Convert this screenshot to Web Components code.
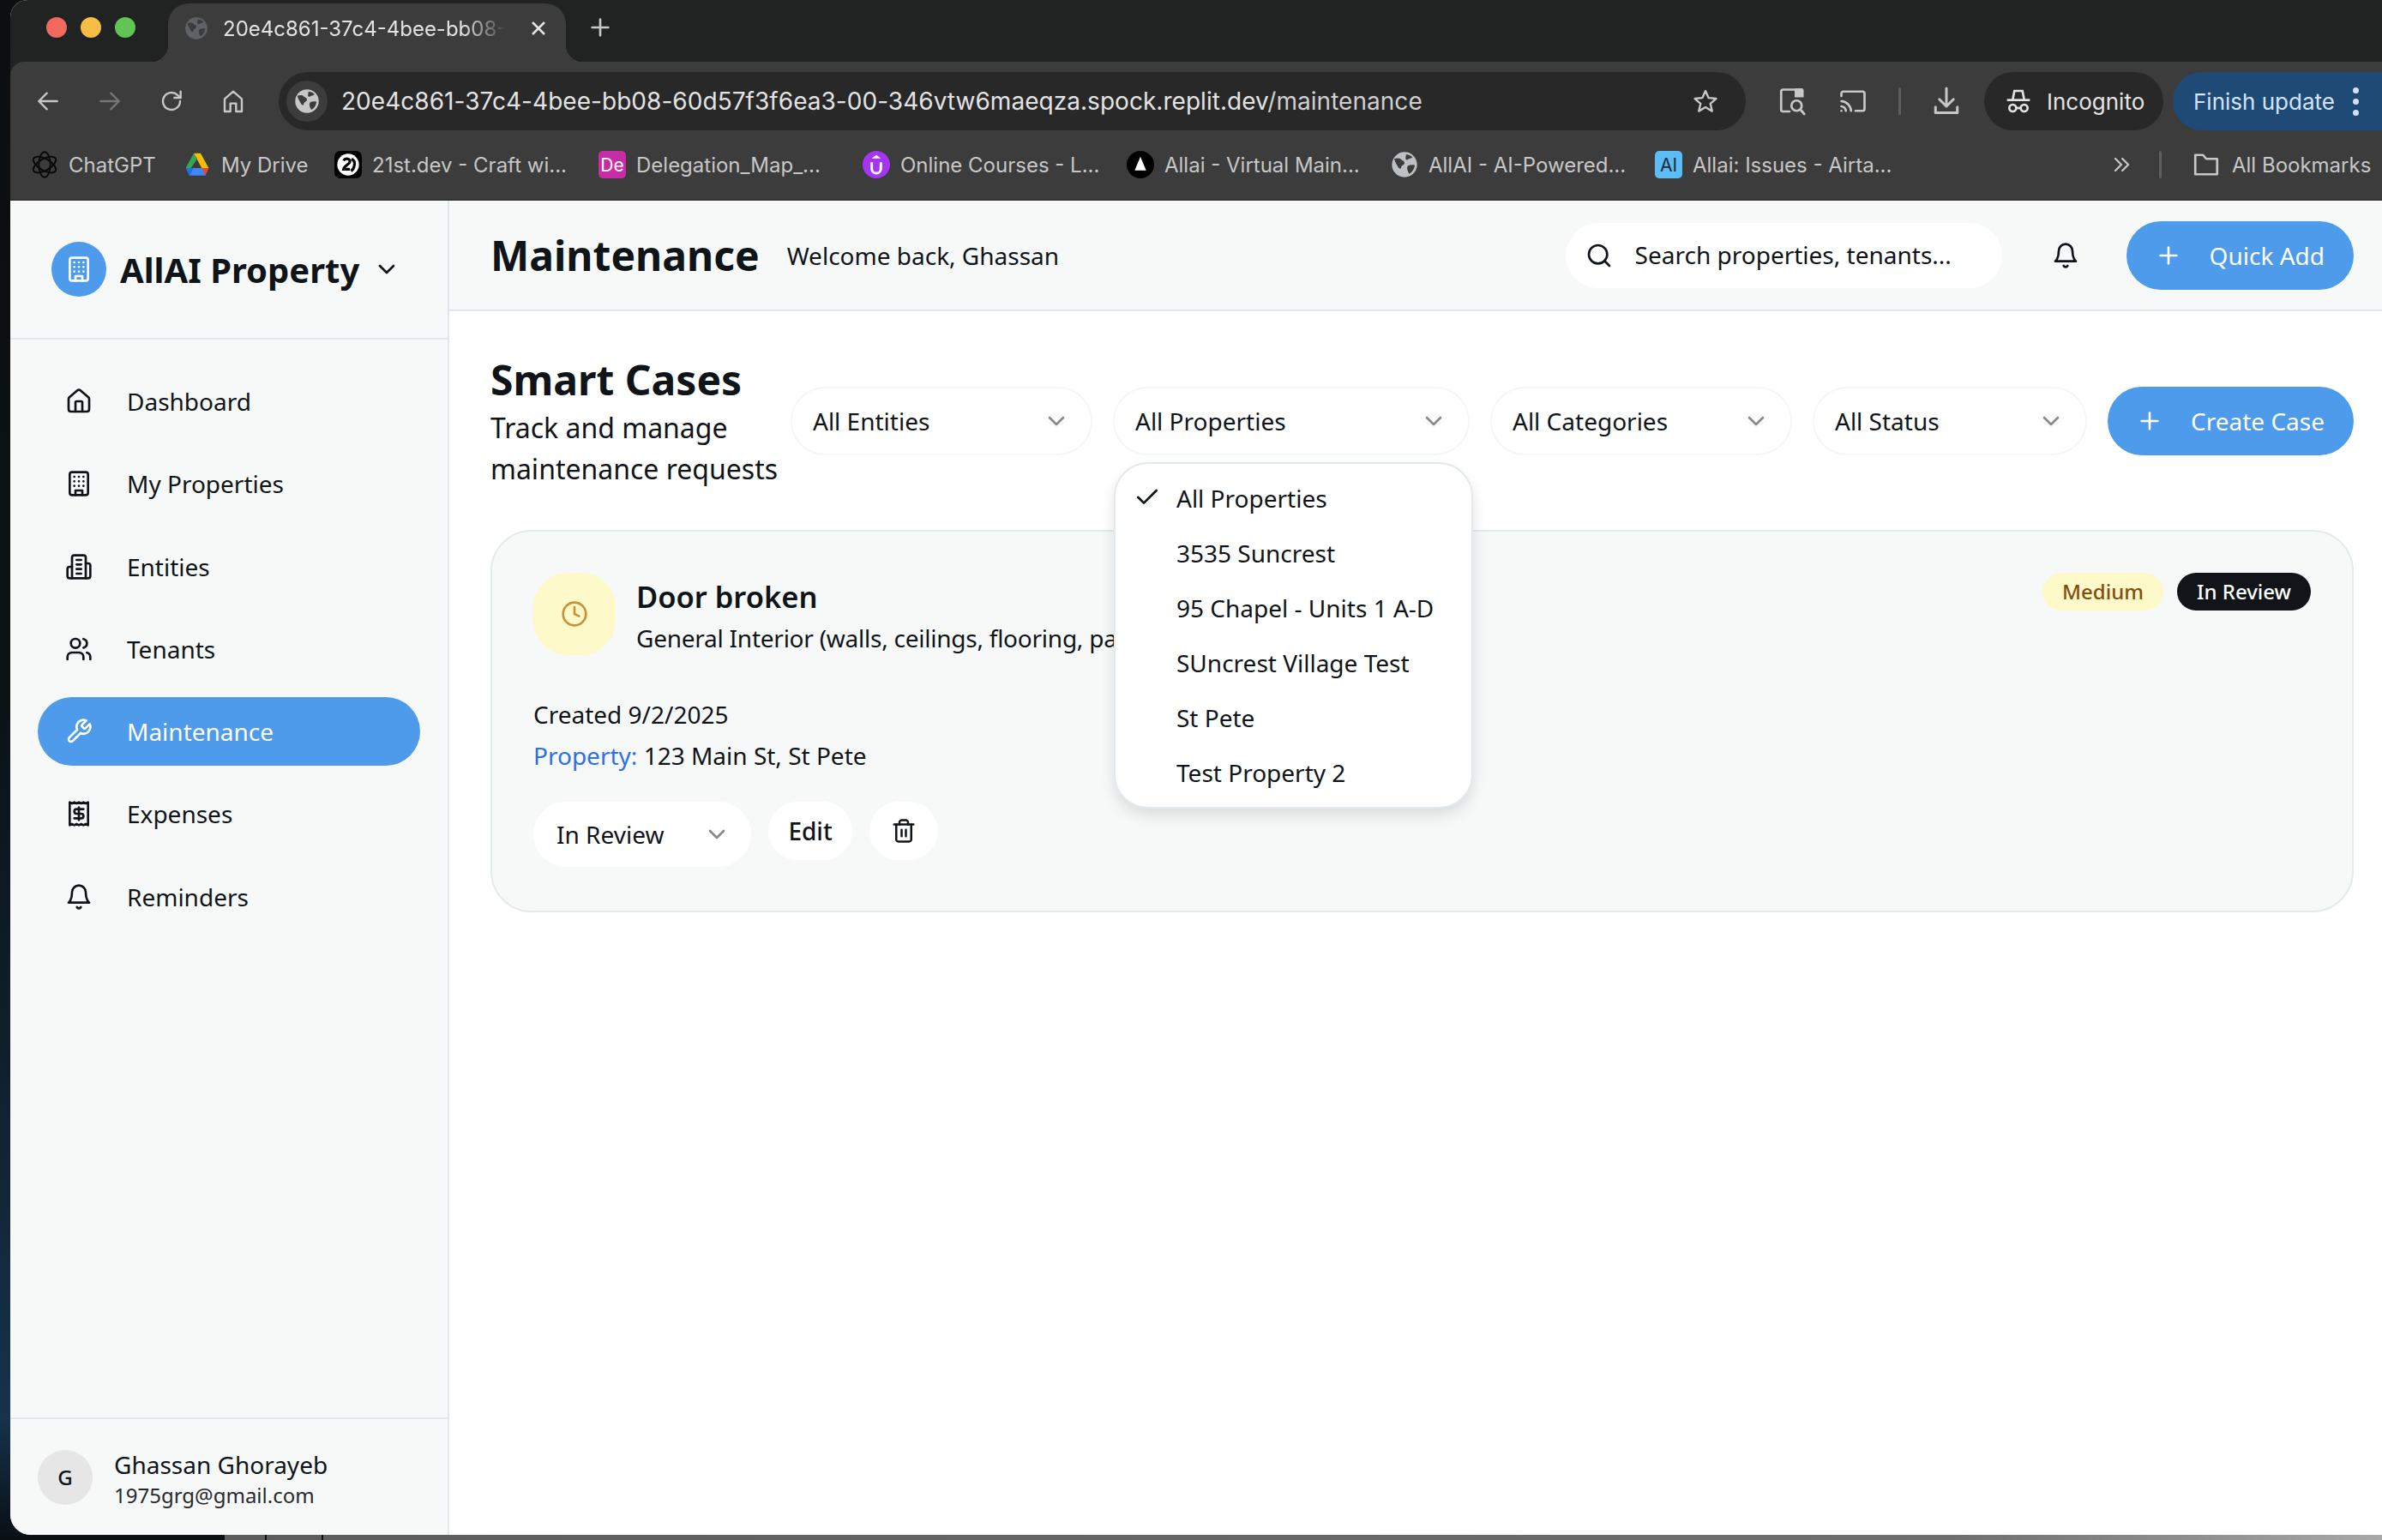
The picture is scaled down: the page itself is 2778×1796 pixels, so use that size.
<!DOCTYPE html>
<html>
<head>
<meta charset="utf-8">
<title>Maintenance</title>
<style>
  html, body { margin: 0; height: 100%; overflow: hidden; background: #0b0f13; }
  body { font-family: "Noto Sans", "Open Sans", sans-serif; color: #0f1419; }
</style>
</head>
<body>
<desktop-frame>
  <browser-chrome></browser-chrome>
  <app-sidebar>
    <nav-item icon="house">Dashboard</nav-item>
    <nav-item icon="building">My Properties</nav-item>
    <nav-item icon="building2">Entities</nav-item>
    <nav-item icon="users">Tenants</nav-item>
    <nav-item icon="wrench" active>Maintenance</nav-item>
    <nav-item icon="receipt">Expenses</nav-item>
    <nav-item icon="bell">Reminders</nav-item>
  </app-sidebar>
  <app-header title="Maintenance" welcome="Welcome back, Ghassan"></app-header>
  <cases-page>
    <filter-select style="width:352px">All Entities</filter-select>
    <filter-select style="width:416px">All Properties
      <property-menu slot="menu">
        <menu-row checked>All Properties</menu-row>
        <menu-row>3535 Suncrest</menu-row>
        <menu-row>95 Chapel - Units 1 A-D</menu-row>
        <menu-row>SUncrest Village Test</menu-row>
        <menu-row>St Pete</menu-row>
        <menu-row>Test Property 2</menu-row>
      </property-menu>
    </filter-select>
    <filter-select style="width:352px">All Categories</filter-select>
    <filter-select style="width:320px">All Status</filter-select>
    <primary-button>Create Case</primary-button>
    <case-card slot="cards"></case-card>
  </cases-page>
</desktop-frame>

<script>
// lucide style icon bodies, 24 box
const ICONS = {
  house: '<path d="M15 21v-8a1 1 0 0 0-1-1h-4a1 1 0 0 0-1 1v8"/><path d="M3 10a2 2 0 0 1 .709-1.528l7-5.999a2 2 0 0 1 2.582 0l7 5.999A2 2 0 0 1 21 10v9a2 2 0 0 1-2 2H5a2 2 0 0 1-2-2z"/>',
  building: '<rect width="16" height="20" x="4" y="2" rx="2" ry="2"/><path d="M9 22v-4h6v4"/><path d="M8 6h.01M16 6h.01M12 6h.01M12 10h.01M12 14h.01M16 10h.01M16 14h.01M8 10h.01M8 14h.01"/>',
  building2: '<path d="M6 22V4a2 2 0 0 1 2-2h8a2 2 0 0 1 2 2v18Z"/><path d="M6 12H4a2 2 0 0 0-2 2v6a2 2 0 0 0 2 2h2"/><path d="M18 9h2a2 2 0 0 1 2 2v9a2 2 0 0 1-2 2h-2"/><path d="M10 6h4M10 10h4M10 14h4M10 18h4"/>',
  users: '<path d="M16 21v-2a4 4 0 0 0-4-4H6a4 4 0 0 0-4 4v2"/><circle cx="9" cy="7" r="4"/><path d="M22 21v-2a4 4 0 0 0-3-3.87"/><path d="M16 3.13a4 4 0 0 1 0 7.75"/>',
  wrench: '<path d="M14.7 6.3a1 1 0 0 0 0 1.4l1.6 1.6a1 1 0 0 0 1.4 0l3.77-3.77a6 6 0 0 1-7.94 7.94l-6.91 6.91a2.12 2.12 0 0 1-3-3l6.91-6.91a6 6 0 0 1 7.94-7.94l-3.76 3.76z"/>',
  receipt: '<path d="M4 2v20l2-1 2 1 2-1 2 1 2-1 2 1 2-1 2 1V2l-2 1-2-1-2 1-2-1-2 1-2-1-2 1Z"/><path d="M16 8h-6a2 2 0 1 0 0 4h4a2 2 0 1 1 0 4H8"/><path d="M12 17.5v-11"/>',
  bell: '<path d="M6 8a6 6 0 0 1 12 0c0 7 3 9 3 9H3s3-2 3-9"/><path d="M10.3 21a1.94 1.94 0 0 0 3.4 0"/>',
  search: '<circle cx="11" cy="11" r="8"/><path d="m21 21-4.3-4.3"/>',
  plus: '<path d="M5 12h14M12 5v14"/>',
  chevron: '<path d="m6 9 6 6 6-6"/>',
  check: '<path d="M20 6 9 17l-5-5"/>',
  clock: '<circle cx="12" cy="12" r="10"/><polyline points="12 6 12 12 16 14"/>',
  trash: '<path d="M3 6h18"/><path d="M19 6v14c0 1-1 2-2 2H7c-1 0-2-1-2-2V6"/><path d="M8 6V4c0-1 1-2 2-2h4c1 0 2 1 2 2v2"/><path d="M10 11v6M14 11v6"/>',
  back: '<path d="M20 12H4M11 5l-7 7 7 7"/>',
  forward: '<path d="M4 12h16M13 5l7 7-7 7"/>',
  reload: '<path d="M19.5 12a7.5 7.5 0 1 1-2.3-5.4L20 9"/><path d="M20 3.5V9h-5.5"/>',
  home: '<path d="M4.500 21V10L12 3.500 19.500 10v11h-5v-7h-5v7z"/>',
  star: '<path d="m12 3 2.700 6.100 6.600.7-5 4.400 1.500 6.500L12 17.300 6.200 20.700l1.500-6.500-5-4.400 6.600-.7z"/>',
  cast: '<path d="M3 8V6a1.500 1.500 0 0 1 1.500-1.500h15A1.500 1.500 0 0 1 21 6v12a1.500 1.500 0 0 1-1.500 1.500H14"/><path d="M3 12a8 8 0 0 1 7.500 7.500M3 16a4 4 0 0 1 3.500 3.500"/><path d="M3 19.500h.01"/>',
  lens: '<path d="M10 20H5a1.500 1.500 0 0 1-1.500-1.500v-14A1.500 1.500 0 0 1 5 3h9"/><path d="M14 2h5.500A1.500 1.500 0 0 1 21 3.500V9h-7z" fill="currentColor" stroke="none"/><circle cx="15.500" cy="15.500" r="4"/><path d="m18.500 18.500 3 3.500"/>',
  download: '<path d="M12 2v14M6.500 10.500 12 16l5.500-5.500"/><path d="M3.500 16.500v4.500h17v-4.500"/>',
  folder: '<path d="M3.500 19.500V4.500h6l2.500 3h8.500v12z"/>',
  dchevron: '<path d="m6 6 6 6-6 6M13 6l6 6-6 6"/>'
};

function icon(name, size, weight) {
  return `<svg width="${size}" height="${size}" viewBox="0 0 24 24" fill="none" stroke="currentColor" stroke-width="${weight || 2}" stroke-linecap="round" stroke-linejoin="round" style="display:block;flex:none">${ICONS[name]}</svg>`;
}

const GLOBE = (size, fill, cut) => `<svg width="${size}" height="${size}" viewBox="0 0 24 24" style="display:block;flex:none"><circle cx="12" cy="12" r="11" fill="${fill}"/><path d="M3 7c3-1 5-.5 6 .5s3 1 3 3-3 2-3 4-2 1-3-1-2-3-3-6.500zM13 3c2 0 4 .500 6 2.500-1 1.500-3 1-4 2s-2.500 0-2-2 .5-2.500 0-2.500zM15 13c2-1 4-1 6-.5-.5 3-2 6-5 7.500-1-2-2.500-5-1-7z" fill="${cut}"/></svg>`;

class DesktopFrame extends HTMLElement {
  connectedCallback() {
    this.attachShadow({ mode: 'open' }).innerHTML = `
      <style>
        :host { display: block; height: 1796px; position: relative;
          background: linear-gradient(180deg, #0c0e10 0, #0b1216 45%, #11202d 70%, #16324c 92%, #0a0f14 100%); }
        .window { margin-left: 12px; width: 2766px; height: 1790px; overflow: hidden; background: #fff;
          border-radius: 20px 0 0 24px; display: grid; grid-template-columns: 512px 1fr; grid-template-rows: 234px 129px 1fr; }
        ::slotted(browser-chrome) { grid-column: 1 / 3; }
        ::slotted(app-sidebar) { grid-row: 2 / 4; }
        .dock { height: 6px; margin-left: 262px; box-shadow: 0 -1px 0 #111;
          background: linear-gradient(#111, #111) 47px 0 / 2px 6px no-repeat, linear-gradient(#111, #111) 113px 0 / 2px 6px no-repeat, linear-gradient(90deg, #5c5c5c, #6e6e6e 80%, #a8a8a8); }
      </style>
      <div class="window"><slot></slot></div>
      <div class="dock"></div>`;
  }
}

class BrowserChrome extends HTMLElement {
  connectedCallback() {
    const marks = [
      [178, 'ChatGPT', `<svg width="32" height="32" viewBox="0 0 24 24" fill="none" stroke="#0a0a0a" stroke-width="1.500"><ellipse cx="12" cy="12" rx="5" ry="11"/><ellipse cx="12" cy="12" rx="5" ry="11" transform="rotate(60 12 12)"/><ellipse cx="12" cy="12" rx="5" ry="11" transform="rotate(120 12 12)"/></svg>`],
      [176, 'My Drive', `<svg width="32" height="32" viewBox="0 0 24 24"><path d="M9 2h6l7 13h-6z" fill="#fbbc04"/><path d="M8.500 15H22l-3 6.500H5z" fill="#4285f4"/><path d="M2 15l6.500 0L5 21.500z" fill="#1a73e8"/><path d="M9 2l3 5-5.500 8H2z" fill="#34a853"/><path d="M22 15l-3 6.500-3-6.500z" fill="#ea4335"/></svg>`],
      [308, '21st.dev - Craft wi...', `<svg width="32" height="32" viewBox="0 0 24 24"><rect width="24" height="24" rx="5" fill="#000"/><circle cx="12" cy="12" r="9.500" fill="#fff"/><path d="M8 8.500c1.500-2.500 6-2 5.500 1-.4 2.500-5 3.500-5.500 6.500h5.500M15 7c2 1 3 3 2.500 5.500-.3 2-1.500 4-3 5" fill="none" stroke="#000" stroke-width="2.400"/></svg>`],
      [308, 'Delegation_Map_...', `<span class="tile" style="background:#c62ca6;color:#fff">De</span>`],
      [308, 'Online Courses - L...', `<svg width="32" height="32" viewBox="0 0 24 24"><circle cx="12" cy="12" r="12" fill="#a435f0"/><path d="M8 10v5.500a4 4 0 0 0 8 0V10" fill="none" stroke="#fff" stroke-width="2.200"/><path d="M12 3.500 16 6.500H8z" fill="#fff"/></svg>`],
      [308, 'Allai - Virtual Main...', `<svg width="32" height="32" viewBox="0 0 24 24"><circle cx="12" cy="12" r="12" fill="#000"/><path d="M12 5l5 12H7z" fill="#fff"/></svg>`],
      [308, 'AllAI - AI-Powered...', GLOBE(32, '#bdc1c6', '#3c3c3c')],
      [532, 'Allai: Issues - Airta...', `<span class="tile" style="background:#5cbcf6;color:#1d2b36">AI</span>`]
    ].map(m => `<span class="mark" style="width:${m[0]}px">${m[2]}<span>${m[1]}</span></span>`).join('');
    this.attachShadow({ mode: 'open' }).innerHTML = `
      <style>
        :host { display: block; font-family: Inter, "Liberation Sans", sans-serif; background: #212322; color: #e3e3e3; }
        .strip { height: 72px; display: flex; align-items: flex-end; }
        .lights { width: 184px; height: 68px; display: flex; gap: 16px; padding: 16px 0 0 42px; box-sizing: border-box; }
        .lights i { width: 24px; height: 24px; border-radius: 50%; }
        .tab { width: 464px; height: 68px; background: #3c3c3c; border-radius: 24px 24px 0 0; position: relative;
          display: flex; align-items: center; padding: 0 0 10px 19px; box-sizing: border-box; gap: 17px; font-size: 24px; }
        .tab::before, .tab::after { content: ""; position: absolute; bottom: 0; width: 20px; height: 20px; }
        .tab::before { left: -20px; background: radial-gradient(circle at 0 0, transparent 20px, #3c3c3c 20.500px); }
        .tab::after { right: -20px; background: radial-gradient(circle at 100% 0, transparent 20px, #3c3c3c 20.500px); }
        .tab b { font-weight: 400; white-space: nowrap;
          -webkit-mask-image: linear-gradient(90deg, #000 85%, transparent); mask-image: linear-gradient(90deg, #000 85%, transparent); }
        .tab svg.x { position: absolute; left: 418px; top: 15px; }
        .newtab { margin: 0 0 24px 24px; color: #c7c7c7; }
        .bar { background: #3c3c3c; border-radius: 16px 0 0 0; height: 160px; border-bottom: 2px solid #333; }
        .row1 { height: 68px; padding: 12px 0 0 8px; display: flex; align-items: stretch; color: #c7c7c7; }
        .btn { width: 72px; display: flex; align-items: center; justify-content: center; }
        .dim { color: #757575; }
        .omni { flex: 1; margin-left: 17px; background: #282828; border-radius: 34px; display: flex; align-items: center; padding: 0 31px 0 9px; gap: 16px; }
        .chip { width: 48px; height: 48px; border-radius: 50%; background: #3c3c3c; display: flex; align-items: center; justify-content: center; }
        .url { flex: 1; font-size: 28px; letter-spacing: .04px; color: #e3e3e3; white-space: nowrap; }
        .url span { color: #cfcfcf; }
        .sep { width: 3px; height: 32px; border-radius: 2px; background: #5e5e5e; align-self: center; margin: 0 18px; flex: none; }
        .pill { display: flex; align-items: center; border-radius: 34px; font-size: 26px; box-sizing: border-box; }
        .incog { width: 209px; margin-left: 9px; background: #282828; color: #e3e3e3; padding-left: 24px; gap: 17px; }
        .finish { width: 244px; margin-left: 11px; background: #1f4a75; color: #d3e3fd; padding-left: 24px; border-radius: 34px 0 0 34px; white-space: nowrap; }
        .dots { margin-left: 21px; display: grid; gap: 6px; }
        .dots i { width: 7px; height: 7px; border-radius: 50%; background: #d3e3fd; }
        .row2 { height: 80px; display: flex; align-items: center; padding-left: 24px; font-size: 24px; color: #c7c7c7; white-space: nowrap; }
        .mark { display: flex; align-items: center; gap: 12px; flex: none; }
        .tile { width: 32px; height: 32px; border-radius: 5px; display: flex; align-items: center; justify-content: center; font-size: 21px; flex: none; }
        .more { width: 24px; display: flex; justify-content: center; }
        .vline { width: 3px; height: 32px; background: #5e5e5e; margin: 0 34px 0 32px; border-radius: 2px; }
      </style>
      <div class="strip">
        <div class="lights"><i style="background:#f1695e"></i><i style="background:#f7bd45"></i><i style="background:#61c554"></i></div>
        <div class="tab">${GLOBE(28, '#5f6368', '#3c3c3c')}<b>20e4c861-37c4-4bee-bb08-</b>
          <svg class="x" width="28" height="28" viewBox="0 0 24 24" fill="none" stroke="#e3e3e3" stroke-width="2.200"><path d="M6 6l12 12M18 6 6 18"/></svg></div>
        <div class="newtab">${icon('plus', 32, 2)}</div>
      </div>
      <div class="bar">
        <div class="row1">
          <span class="btn">${icon('back', 32, 1.800)}</span>
          <span class="btn dim">${icon('forward', 32, 1.800)}</span>
          <span class="btn">${icon('reload', 32, 1.800)}</span>
          <span class="btn">${icon('home', 32, 1.800)}</span>
          <div class="omni">
            <span class="chip">${GLOBE(30, '#c7c7c7', '#3c3c3c')}</span>
            <span class="url">20e4c861-37c4-4bee-bb08-60d57f3f6ea3-00-346vtw6maeqza.spock.replit.dev<span>/maintenance</span></span>
            ${icon('star', 32, 1.800)}
          </div>
          <span class="btn" style="width:71px;margin-left:18px">${icon('lens', 36, 1.800)}</span>
          <span class="btn" style="width:71px">${icon('cast', 36, 1.800)}</span>
          <span class="sep"></span>
          <span class="btn" style="width:70px">${icon('download', 36, 2)}</span>
          <div class="pill incog">
            <svg width="32" height="32" viewBox="0 0 24 24" fill="none" stroke="currentColor" stroke-width="2" style="flex:none"><path d="M7 10.500 8.500 3h7L17 10.500" fill="none"/><path d="M2 11h20"/><circle cx="7" cy="18" r="3"/><circle cx="17" cy="18" r="3"/><path d="M10 18h4"/></svg>
            <span>Incognito</span>
          </div>
          <div class="pill finish"><span>Finish update</span><span class="dots"><i></i><i></i><i></i></span></div>
        </div>
        <div class="row2">
          ${marks}
          <span class="more">${icon('dchevron', 28, 2)}</span>
          <span class="vline"></span>
          <span class="mark" style="gap:12px">${icon('folder', 36, 1.800)}<span>All Bookmarks</span></span>
        </div>
      </div>`;
  }
}

class AppSidebar extends HTMLElement {
  connectedCallback() {
    this.attachShadow({ mode: 'open' }).innerHTML = `
      <style>
        :host { display: flex; flex-direction: column; background: #f7f9f9; border-right: 2px solid #e1e8ed; box-sizing: border-box; height: 100%; min-height: 0; }
        .brand { height: 160px; border-bottom: 2px solid #e1e8ed; display: flex; align-items: center; padding-left: 48px; flex: none; }
        .logo { width: 64px; height: 64px; border-radius: 50%; background: #4d9bea; color: #fff; display: flex; align-items: center; justify-content: center; flex: none; }
        .name { margin-left: 16px; font-size: 40px; font-weight: 700; white-space: nowrap; }
        .caret { margin-left: 16px; }
        nav { flex: 1; padding: 32px; display: flex; flex-direction: column; gap: 16.25px; }
        .user { flex: none; height: 135px; border-top: 2px solid #e1e8ed; display: flex; align-items: center; padding-left: 32px; gap: 25px; }
        .avatar { width: 64px; height: 64px; border-radius: 50%; background: #e6e6e6; display: flex; align-items: center; justify-content: center; font-size: 24px; font-weight: 500; flex: none; }
        .who { display: grid; padding-top: 7px; }
        .who b { font-weight: 400; font-size: 28px; line-height: 36px; }
        .who span { font-size: 24px; line-height: 36px; color: #26292d; }
      </style>
      <div class="brand">
        <span class="logo">${icon('building', 32)}</span>
        <span class="name">AllAI Property</span>
        <span class="caret">${icon('chevron', 32)}</span>
      </div>
      <nav><slot></slot></nav>
      <div class="user">
        <span class="avatar">G</span>
        <div class="who"><b>Ghassan Ghorayeb</b><span>1975grg@gmail.com</span></div>
      </div>`;
  }
}

class NavItem extends HTMLElement {
  connectedCallback() {
    this.attachShadow({ mode: 'open' }).innerHTML = `
      <style>
        :host { display: flex; align-items: center; height: 80px; padding-left: 32px; gap: 40px; border-radius: 40px; font-size: 28px; color: #0f1419; }
        :host([active]) { background: #4d9bea; color: #fff; }
      </style>
      ${icon(this.getAttribute('icon'), 32)}<span><slot></slot></span>`;
  }
}

class PrimaryButton extends HTMLElement {
  connectedCallback() {
    this.attachShadow({ mode: 'open' }).innerHTML = `
      <style>
        :host { display: flex; align-items: center; height: 80px; padding: 0 34px 0 33px; gap: 32px; border-radius: 40px; background: #4d9bea; color: #fff; font-size: 28px; white-space: nowrap; flex: none; box-sizing: border-box; }
      </style>
      ${icon('plus', 32)}<span><slot></slot></span>`;
  }
}

class AppHeader extends HTMLElement {
  connectedCallback() {
    this.attachShadow({ mode: 'open' }).innerHTML = `
      <style>
        :host { display: flex; align-items: center; background: #f7f9f9; border-bottom: 2px solid #e1e8ed; padding: 0 33px 0 48px; box-sizing: border-box; height: 129px; }
        h1 { margin: 0; font-size: 48px; font-weight: 700; white-space: nowrap; }
        p { margin: 0 0 0 32px; font-size: 28px; white-space: nowrap; }
        .search { margin-left: auto; width: 509px; height: 76px; border-radius: 38px; background: #fff; display: flex; align-items: center; padding-left: 23px; gap: 26px; font-size: 28px; box-sizing: border-box; }
        .search span { margin-top: -2px; }
        .bell { width: 80px; margin: 0 31px 0 34px; display: flex; justify-content: center; }
      </style>
      <h1>${this.getAttribute('title')}</h1>
      <p>${this.getAttribute('welcome')}</p>
      <div class="search">${icon('search', 32)}<span>Search properties, tenants...</span></div>
      <span class="bell">${icon('bell', 32)}</span>
      <primary-button>Quick Add</primary-button>`;
  }
}

class CasesPage extends HTMLElement {
  connectedCallback() {
    this.attachShadow({ mode: 'open' }).innerHTML = `
      <style>
        :host { display: block; background: #fff; padding: 48px 33px 0 48px; min-width: 0; }
        .top { display: flex; align-items: center; gap: 24px; height: 160px; margin-bottom: 47px; position: relative; z-index: 5; }
        .intro { flex: 1; min-width: 0; }
        h2 { margin: 0; font-size: 48px; line-height: 64px; font-weight: 700; white-space: nowrap; }
        p { margin: 0; font-size: 32px; line-height: 48px; white-space: nowrap; }
      </style>
      <div class="top">
        <div class="intro"><h2>Smart Cases</h2><p>Track and manage<br>maintenance requests</p></div>
        <slot></slot>
      </div>
      <slot name="cards"></slot>`;
  }
}

class FilterSelect extends HTMLElement {
  connectedCallback() {
    this.attachShadow({ mode: 'open' }).innerHTML = `
      <style>
        :host { display: flex; align-items: center; justify-content: space-between; height: 80px; flex: none; box-sizing: border-box; padding: 0 24px;
          background: #fff; border: 2px solid #f5f6f6; border-radius: 40px; font-size: 28px; white-space: nowrap; position: relative; }
        .caret { color: #87898b; }
      </style>
      <span><slot></slot></span><span class="caret">${icon('chevron', 32)}</span><slot name="menu"></slot>`;
  }
}

class PropertyMenu extends HTMLElement {
  connectedCallback() {
    this.attachShadow({ mode: 'open' }).innerHTML = `
      <style>
        :host { position: absolute; left: -1px; top: 86px; width: 419px; box-sizing: border-box; padding: 8px; background: #fff;
          border: 2px solid #e3e9ec; border-radius: 40px; box-shadow: 0 8px 16px rgba(15, 20, 25, .12); }
      </style>
      <slot></slot>`;
  }
}

class MenuRow extends HTMLElement {
  connectedCallback() {
    this.attachShadow({ mode: 'open' }).innerHTML = `
      <style>
        :host { display: flex; align-items: center; height: 64px; position: relative; padding-left: 63px; font-size: 28px; }
        svg { position: absolute !important; left: 13px; top: 15px; }
      </style>
      ${this.hasAttribute('checked') ? icon('check', 32) : ''}<slot></slot>`;
  }
}

class CaseCard extends HTMLElement {
  connectedCallback() {
    this.attachShadow({ mode: 'open' }).innerHTML = `
      <style>
        :host { display: block; box-sizing: border-box; border: 2px solid #e3e9ec; border-radius: 48px; background: #f7f9f9; padding: 48px; font-size: 28px; height: 446px; }
        .head { display: flex; align-items: flex-start; }
        .tile { width: 96px; height: 96px; border-radius: 40px; background: #fef9c8; color: #c8913a; display: flex; align-items: center; justify-content: center; flex: none; }
        .copy { margin-left: 24px; flex: 1; min-width: 0; }
        h3 { margin: 0; font-size: 34.5px; line-height: 56px; font-weight: 600; }
        .copy p { margin: 0; line-height: 40px; letter-spacing: -.24px; }
        .badges { display: flex; gap: 16px; }
        .badge { height: 44px; line-height: 44px; padding: 0 23px; border-radius: 22px; font-size: 24px; font-weight: 500; }
        .medium { background: #fef9c8; color: #854d0e; }
        .review { background: #111418; color: #fff; }
        .meta { margin-top: 45px; line-height: 48px; }
        .meta em { font-style: normal; color: #2f6fe4; }
        .acts { margin-top: 30px; display: flex; gap: 20px; align-items: flex-start; }
        .sel { width: 254px; height: 76px; border-radius: 38px; background: #fff; display: flex; align-items: center; justify-content: space-between; padding: 0 24px 0 27px; box-sizing: border-box; }
        .sel span { color: #87898b; }
        .btn { height: 68px; border-radius: 34px; background: #fff; display: flex; align-items: center; justify-content: center; font-weight: 500; }
      </style>
      <div class="head">
        <span class="tile">${icon('clock', 32)}</span>
        <div class="copy">
          <h3>Door broken</h3>
          <p>General Interior (walls, ceilings, flooring, paint, etc.)</p>
        </div>
        <div class="badges"><span class="badge medium">Medium</span><span class="badge review">In Review</span></div>
      </div>
      <div class="meta">
        <div>Created 9/2/2025</div>
        <div><em>Property:</em> 123 Main St, St Pete</div>
      </div>
      <div class="acts">
        <div class="sel">In Review<span>${icon('chevron', 32)}</span></div>
        <div class="btn" style="width:98px">Edit</div>
        <div class="btn" style="width:80px">${icon('trash', 30)}</div>
      </div>`;
  }
}

customElements.define('desktop-frame', DesktopFrame);
customElements.define('browser-chrome', BrowserChrome);
customElements.define('app-sidebar', AppSidebar);
customElements.define('nav-item', NavItem);
customElements.define('primary-button', PrimaryButton);
customElements.define('app-header', AppHeader);
customElements.define('cases-page', CasesPage);
customElements.define('filter-select', FilterSelect);
customElements.define('property-menu', PropertyMenu);
customElements.define('menu-row', MenuRow);
customElements.define('case-card', CaseCard);
</script>
</body>
</html>
